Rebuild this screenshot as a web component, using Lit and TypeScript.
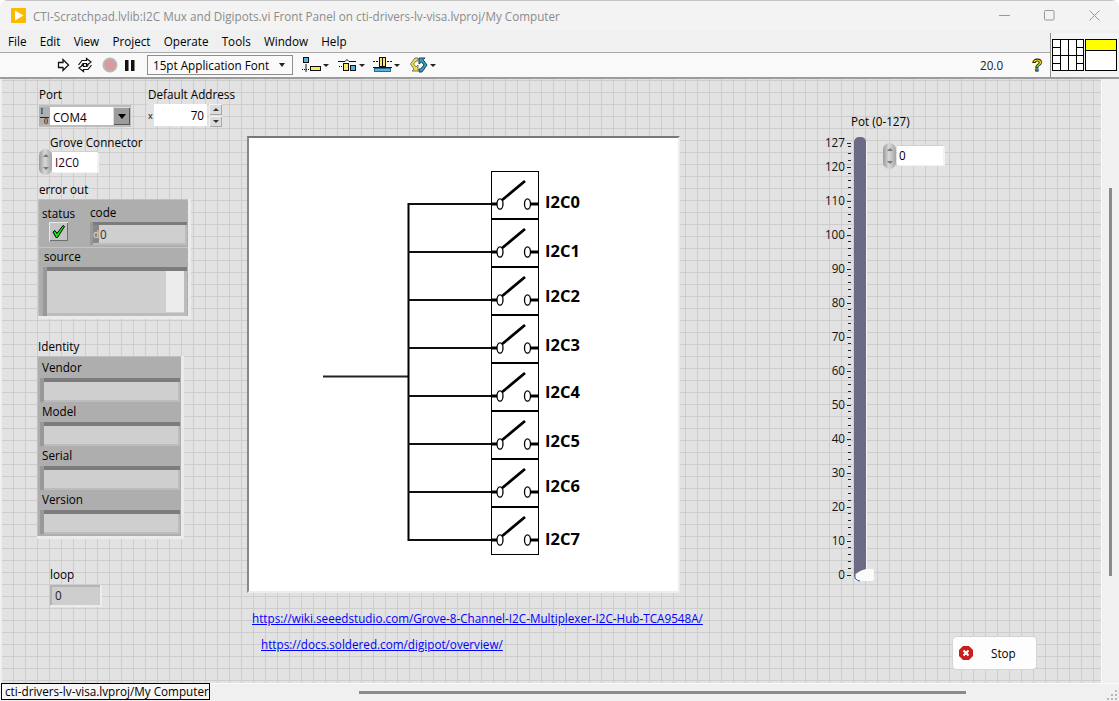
import { LitElement, html, css, svg } from "lit";
import { customElement } from "lit/decorators.js";

const SWITCHES = [
  { y: 204, label: "I2C0", ly: 208 },
  { y: 252, label: "I2C1", ly: 257 },
  { y: 300, label: "I2C2", ly: 302 },
  { y: 348, label: "I2C3", ly: 351 },
  { y: 396, label: "I2C4", ly: 398 },
  { y: 444, label: "I2C5", ly: 447 },
  { y: 492, label: "I2C6", ly: 492 },
  { y: 540, label: "I2C7", ly: 545 },
];
const CLUSTER = ["Vendor", "Model", "Serial", "Version"];
const SCALE = [127, 120, 110, 100, 90, 80, 70, 60, 50, 40, 30, 20, 10, 0];
const MENU = ["File", "Edit", "View", "Project", "Operate", "Tools", "Window", "Help"];

function scaleY(v: number) {
  return 574.5 - v * 3.4;
}

@customElement("app-root")
export class AppRoot extends LitElement {
  static styles = css`
    :host { display: block; width: 1119px; height: 701px; overflow: hidden; background: #fff;
      font-family: "Open Sans", "Noto Sans", sans-serif; font-size: 11.7px; color: #000; }
    .window { width: 1119px; height: 701px; display: flex; flex-direction: column; background: #f0f0f0; position: relative;
      border-radius: 8px 8px 0 0; box-sizing: border-box; overflow: hidden; }
    .title { height: 30px; flex: none; display: flex; align-items: center; padding-left: 11px; gap: 7px;
      background: #f3f3f3; color: #8b8b8b; box-shadow: inset 0 1px 0 #c4c4c4; }
    .logo { width: 15px; height: 15px; flex: none; display: block; }
    .title-text { flex: 1; white-space: nowrap; position: relative; top: 1px; }
    .caps { display: flex; align-items: center; height: 30px; padding-right: 2px; }
    .cap { width: 45px; height: 30px; display: flex; align-items: center; justify-content: center; }
    .cap svg { display: block; }
    .menubar { height: 23px; flex: none; display: flex; align-items: center; padding-left: 8px; gap: 13.2px;
      background: #f0f0f0; border-bottom: 1px solid #a8a8a8; box-sizing: border-box; }
    .toolbar { height: 26px; flex: none; display: flex; align-items: center; background: #f9f9f9; padding-left: 55px;
      border-bottom: 2px solid #9c9c9c; box-sizing: border-box; position: relative; }
    .toolbar svg { display: block; flex: none; }
    .tool-run { margin-right: 6px; }
    .tool-loop { margin-right: 9px; }
    .tool-abort { margin-right: 7px; }
    .tool-pause { margin-right: 12px; }
    .fontbox { width: 146px; height: 20px; box-sizing: border-box; border: 1px solid #8e8e8e; display: flex;
      align-items: center; padding: 0 7px 0 5px; justify-content: space-between; margin-right: 9px; background: #fafafa; }
    .caret { width: 0; height: 0; border-left: 3.5px solid transparent; border-right: 3.5px solid transparent;
      border-top: 4px solid #222; }
    .tool-group { display: flex; align-items: center; gap: 2px; margin-right: 8.5px; }
    .tool-group .caret { border-left-width: 3px; border-right-width: 3px; border-top-width: 3px; }
    .ctx { position: absolute; left: 980px; top: 4px; color: #222; }
    .help { position: absolute; left: 1031px; top: 3px; }
    .connector { position: absolute; left: 1050px; top: 33px; width: 69px; height: 44px; background: #f4f4f4;
      border-left: 1px solid #8e8e8e; box-sizing: border-box; z-index: 3; }
    .connector svg { display: block; margin: 6px 0 0 1px; }
    .workspace { flex: 1; display: flex; min-height: 0; }
    .canvas { flex: 1; position: relative; overflow: hidden; background-color: #e2e2e2;
      background-image: linear-gradient(#cdcdcd 1px, transparent 1px), linear-gradient(90deg, #cdcdcd 1px, transparent 1px);
      background-size: 12px 12px; background-position: 1px 1px; box-shadow: inset 2px 0 0 #f0f0f0; }
    .vscroll { width: 18px; flex: none; position: relative; background: #f0f0f0; box-shadow: inset 1px 0 0 #fafafa; }
    .vthumb { position: absolute; left: 7.500px; top: 109px; width: 3px; height: 388px; background: #8a8a8a; }
    .statusbar { height: 18px; flex: none; position: relative; background: #f0f0f0; box-shadow: inset 0 1px 0 #fafafa; }
    .tip { position: absolute; left: 1px; top: 0; width: 209px; height: 17px; box-sizing: border-box; border: 1px solid #000;
      background: #f6f6f6; padding-left: 3px; line-height: 14px; white-space: nowrap; overflow: hidden; }
    .hthumb { position: absolute; left: 359px; top: 8px; width: 607px; height: 3px; background: #8a8a8a; }
    .grip { position: absolute; right: 1px; bottom: 1px; display: block; }

    .abs { position: absolute; white-space: nowrap; }
    .lab { line-height: 15px; }

    .l-port { left: 39px; top: 8px; }
    .port { left: 39px; top: 26px; width: 92px; height: 22px; background: #bdbdbd; display: flex; align-items: center;
      box-sizing: border-box; padding: 2px 1px 2px 0; }
    .port-io { width: 11px; height: 18px; display: block; flex: none; background: #b0b0b0; }
    .port-io text { font-family: "Liberation Serif", serif; font-weight: 400; font-size: 8px; fill: #000; }
    .port-box { width: 63px; height: 18px; background: #fff; line-height: 20px; padding-left: 3px; box-sizing: border-box; flex: none; }
    .port-btn { width: 17px; height: 18px; background: #9c9c9c; box-shadow: inset 1px 1px 0 #ddd, inset -1px -1px 0 #555;
      display: flex; align-items: center; justify-content: center; }
    .port-btn .caret { border-left-width: 4px; border-right-width: 4px; border-top-width: 5px; border-top-color: #000; }

    .l-addr { left: 148px; top: 8px; }
    .addr { left: 147px; top: 25px; width: 60px; height: 22px; background: #fff; display: flex; }
    .addr-x { width: 6px; background: #dfe3e3; font-size: 9px; line-height: 24px; padding-left: 1px; flex: none; }
    .addr-v { flex: 1; text-align: right; padding-right: 3px; line-height: 22px; }
    .spin { left: 209px; top: 25px; display: flex; flex-direction: column; gap: 1px; }
    .spin i { display: flex; width: 13px; height: 11px; background: #dcdcdc; box-shadow: inset 1px 1px 0 #f2f2f2, inset -1px -1px 0 #a8a8a8; box-sizing: border-box;
      align-items: center; justify-content: center; }
    .tri-up { width: 0; height: 0; border-left: 3.500px solid transparent; border-right: 3.500px solid transparent; border-bottom: 3px solid #333; }
    .tri-dn { width: 0; height: 0; border-left: 3.500px solid transparent; border-right: 3.500px solid transparent; border-top: 3px solid #333; }

    .l-grove { left: 50px; top: 56px; }
    .ring { width: 13px; height: 26px; border-radius: 6.500px; background: linear-gradient(90deg, #9a9a9a, #d8d8d8 45%, #a4a4a4);
      display: flex; flex-direction: column; align-items: center; justify-content: space-between; padding: 5px 0; box-sizing: border-box; }
    .ring .tri-up { border-bottom-color: #7a7a7a; }
    .ring .tri-dn { border-top-color: #7a7a7a; }
    .grove-ring { left: 39px; top: 70px; }
    .grove-box { left: 52px; top: 73px; width: 45px; height: 20px; background: #fff; padding-left: 3px; line-height: 21px; box-sizing: border-box;
      box-shadow: 0 -1px 0 #d0d0d0, 1px 0 0 #f2f2f2, 2px 1px 0 #f2f2f2; color: #202; }

    .l-err { left: 39px; top: 103px; }
    .cluster { background: #aeaeae; box-shadow: inset 1px 1px 0 #c0c0c0; border-right: 3px solid #ebebeb; border-bottom: 3px solid #ebebeb;
      box-sizing: border-box; }
    .err { left: 38px; top: 120px; width: 153px; height: 120px; }
    .e-status { left: 42px; top: 127px; }
    .e-code { left: 90px; top: 126px; }
    .e-check { left: 49px; top: 143px; width: 19px; height: 19px; background: #c4c4c4; box-shadow: inset 1px 1px 0 #e8e8e8, inset -1px -1px 0 #707070;
      display: flex; align-items: center; justify-content: center; }
    .sunk { background: #cfcfcf; box-sizing: border-box; box-shadow: inset 3px 0 0 #999, inset 0 3px 0 #7c7c7c, inset -2px -2px 0 #bcbcbc; }
    .codebox { left: 90px; top: 143px; width: 97px; height: 23px; display: flex; line-height: 25px; }
    .codebox-d { width: 6px; margin: 3px 0 2px 3px; background: #888; color: #ddd; font-size: 10px; line-height: 19px; text-align: right; flex: none; }
    .codebox-v { padding-left: 1px; color: #333; }
    .e-divb { left: 39px; top: 168px; width: 149px; height: 1px; background: #c4c4c4; }
    .e-source { left: 44px; top: 170px; }
    .sourcebox { left: 43px; top: 188px; width: 144px; height: 49px; box-shadow: inset 4px 0 0 #999, inset 0 4px 0 #7c7c7c, inset -3px -3px 0 #bcbcbc; }
    .sourcebar { left: 166px; top: 192px; width: 18px; height: 41px; background: #ececec; }

    .l-id { left: 38px; top: 260px; }
    .identity { left: 37px; top: 277px; width: 147px; height: 183px; display: flex; flex-direction: column; padding: 2px 1px 0 3px; }
    .id-row { height: 44px; flex: none; box-sizing: border-box; }
    .id-name { height: 20px; line-height: 18px; padding-left: 2px; }
    .id-box { height: 24px; box-shadow: inset 4px 0 0 #999, inset 0 4px 0 #7c7c7c, inset -2px -2px 0 #bcbcbc; }

    .l-loop { left: 50px; top: 488px; }
    .loopbox { left: 50px; top: 506px; width: 52px; height: 22px; background: #cecece; line-height: 20px; padding-left: 5px; box-sizing: border-box;
      box-shadow: inset 2px 2px 0 #b4b4b4; border-right: 2px solid #ececec; border-bottom: 2px solid #ececec; color: #222; }

    .pic { left: 247px; top: 57px; width: 433px; height: 457px; background: #fff; box-sizing: border-box;
      border-top: 2px solid #777; border-left: 2px solid #888; border-right: 2px solid #ededed; border-bottom: 2px solid #ededed; }
    .pic svg { display: block; }
    .pic text { font-family: "Open Sans", "Noto Sans", sans-serif; font-weight: 700; font-size: 16.500px; fill: #000; }

    a.link { color: #0000ff; text-decoration: underline; }
    .link1 { left: 252px; top: 532px; }
    .link2 { left: 261px; top: 558px; }

    .l-pot { left: 851px; top: 35px; }
    .slider { left: 820px; top: 50px; }
    .slider text { font-family: "Open Sans", "Noto Sans", sans-serif; font-size: 11.700px; fill: #111; }
    .pot-ring { left: 883px; top: 64px; }
    .pot-box { left: 897px; top: 67px; width: 46px; height: 19px; background: #fff; padding-left: 2px; line-height: 19px; box-sizing: border-box;
      box-shadow: 0 -1px 0 #d0d0d0, 1px 0 0 #f2f2f2, 2px 1px 0 #f2f2f2; }

    .stop { left: 953px; top: 558px; width: 83px; height: 32px; background: #fdfdfd; border-radius: 4px; box-shadow: 0 0 0 1px #d4d4d4;
      display: flex; align-items: center; }
    .stop svg { margin-left: 6px; flex: none; display: block; }
    .stop span { margin-left: 18px; }
  `;

  private picture() {
    return svg`<svg width="429" height="453" viewBox="249 138 429 453">
      <rect x="491.5" y="171.5" width="47" height="383" fill="#fff" stroke="#000" stroke-width="1"/>
      ${SWITCHES.slice(0, 7).map((s) => svg`<line x1="491" x2="539" y1=${s.y + 15} y2=${s.y + 15} stroke="#000" stroke-width="2"/>`)}
      <line x1="323" x2="408" y1="376.5" y2="376.5" stroke="#222" stroke-width="2"/>
      <line x1="408.5" x2="408.5" y1="203" y2="541" stroke="#000" stroke-width="2"/>
      ${SWITCHES.map(
        (s) => svg`
        <line x1="408" x2="491" y1=${s.y} y2=${s.y} stroke="#111" stroke-width="2"/>
        <line x1="491" x2="497" y1=${s.y} y2=${s.y} stroke="#000" stroke-width="3"/>
        <line x1="530" x2="539" y1=${s.y} y2=${s.y} stroke="#000" stroke-width="3"/>
        <line x1="501" x2="525" y1=${s.y - 3} y2=${s.y - 23} stroke="#000" stroke-width="2.800"/>
        <ellipse cx="500" cy=${s.y} rx="3" ry="5.200" fill="#fff" stroke="#000" stroke-width="1.300"/>
        <ellipse cx="527.500" cy=${s.y} rx="3" ry="5.200" fill="#fff" stroke="#000" stroke-width="1.300"/>
        <text x="545" y=${s.ly}>${s.label}</text>`
      )}
    </svg>`;
  }

  private slider() {
    const minors: number[] = [];
    for (let v = 2; v < 127; v += 2) if (v % 10 !== 0) minors.push(v);
    return svg`<svg width="70" height="540" viewBox="820 129 70 540" overflow="visible">
      ${SCALE.map(
        (v) => svg`
        <text x="845" y=${scaleY(v) + 4.5} text-anchor="end">${v}</text>
        <line x1="847" x2="851" y1=${Math.round(scaleY(v)) + 0.5} y2=${Math.round(scaleY(v)) + 0.5} stroke="#222"/>`
      )}
      ${minors.map((v) => svg`<line x1="848" x2="851" y1=${Math.round(scaleY(v)) + 0.5} y2=${Math.round(scaleY(v)) + 0.5} stroke="#222"/>`)}
      <rect x="854" y="137" width="12" height="444" rx="5" fill="#6b6b85"/>
      <line x1="866.5" x2="866.5" y1="142" y2="570" stroke="#f4f4f4"/>
      <path d="M855 579 q-2 -3 2 -6 q4 -3 9 -4 h6 q2 0 2 2 v8 q0 2 -2 2 h-16 z" fill="#fbfbfb"/>
      <path d="M855 575 q-1 5 5 6" fill="none" stroke="#2050d0"/>
    </svg>`;
  }

  render() {
    return html`<div class="window">
      <div class="title">
        <svg class="logo" viewBox="0 0 15 15"><rect width="15" height="15" rx="1" fill="#fcb900"/><path d="M4 2.500 L12.500 7.500 L4 12.500 Z" fill="#fff"/></svg>
        <div class="title-text">CTI-Scratchpad.lvlib:I2C Mux and Digipots.vi Front Panel on cti-drivers-lv-visa.lvproj/My Computer</div>
        <div class="caps">
          <div class="cap"><svg width="11" height="11"><line x1="0" x2="11" y1="5.5" y2="5.5" stroke="#999"/></svg></div>
          <div class="cap"><svg width="11" height="11"><rect x=".5" y=".5" width="9.5" height="9.5" rx="1" fill="none" stroke="#999"/></svg></div>
          <div class="cap"><svg width="11" height="11"><path d="M.5 .5 L10.5 10.5 M10.5 .5 L.5 10.5" stroke="#999"/></svg></div>
        </div>
      </div>
      <div class="menubar">${MENU.map((m) => html`<span>${m}</span>`)}</div>
      <div class="toolbar">
        <svg class="tool-run" width="16" height="16" viewBox="0 0 16 16"><path d="M3.500 5.500 H8 V2.500 L13.500 8 L8 13.500 V10.500 H3.500 Z" fill="#fff" stroke="#111" stroke-width="1.300"/></svg>
        <svg class="tool-loop" width="16" height="16" viewBox="0 0 16 16"><path d="M1.500 8 L5 3.500 H9.500 V1.500 L14 5 L9.500 8.500 V6.500 H6 L4.500 8.500" fill="#fff" stroke="#111" stroke-width="1.200"/><path d="M14.500 8 L11 12.500 H6.500 V14.500 L2 11 L6.500 7.500 V9.500 H10 L11.500 7.500" fill="#fff" stroke="#111" stroke-width="1.200"/></svg>
        <svg class="tool-abort" width="16" height="16" viewBox="0 0 16 16"><circle cx="8" cy="8" r="6.500" fill="#d89a9a" stroke="#b8b8b8" stroke-width="2"/></svg>
        <svg class="tool-pause" width="10" height="13" viewBox="0 0 10 13"><rect x="0" y="1" width="3.500" height="11" fill="#111"/><rect x="6" y="1" width="3.500" height="11" fill="#111"/></svg>
        <div class="fontbox"><span>15pt Application Font</span><span class="caret"></span></div>
        <div class="tool-group">
          <svg width="19" height="16" viewBox="0 0 19 16"><rect x="1.500" y=".5" width="5" height="5" fill="#5ab4e0" stroke="#111"/><path d="M4 7 V15" stroke="#111"/><path d="M0 12.500 H8" stroke="#111" stroke-dasharray="1 1"/><rect x="8.500" y="9.500" width="10" height="4" fill="#f6e96a" stroke="#111"/></svg>
          <span class="caret"></span>
        </div>
        <div class="tool-group">
          <svg width="19" height="16" viewBox="0 0 19 16"><path d="M0 4.500 H7 L9 2.500 L11 4.500 H18" fill="none" stroke="#111"/><path d="M1 9.500 H4" stroke="#111" stroke-dasharray="1 1"/><rect x="5.500" y="6.500" width="5" height="7" fill="#f6e96a" stroke="#111"/><rect x="12.500" y="8.500" width="5" height="5" fill="#5ab4e0" stroke="#111"/></svg>
          <span class="caret"></span>
        </div>
        <div class="tool-group">
          <svg width="19" height="16" viewBox="0 0 19 16"><rect x="6.500" y=".5" width="3" height="9" fill="#f6e96a" stroke="#111"/><rect x="9.500" y=".5" width="3" height="9" fill="#f6e96a" stroke="#111"/><path d="M0 4.500 H5 M14 4.500 H19" stroke="#111" stroke-dasharray="2 1"/><path d="M0 10.500 H19" stroke="#111"/><rect x="1.500" y="11.500" width="16" height="3" fill="#5ab4e0" stroke="#2a6a8a"/></svg>
          <span class="caret"></span>
        </div>
        <div class="tool-group">
          <svg width="19" height="18" viewBox="0 0 19 18"><path d="M9 2 H6 L1.500 8 L5 13 L3 15 H9 V9 L7 11 L4.500 8 L7 5 H9 Z" fill="#f2e23c" stroke="#776"/><path d="M10 2 V8 L12.500 6 L15 9 L11.500 13 H10 V16 H13 L18 9 L14 3.500 L16 2 Z" fill="#2e9cc4" stroke="#245"/></svg>
          <span class="caret"></span>
        </div>
        <div class="ctx">20.0</div>
        <svg class="help" width="14" height="19" viewBox="0 0 14 19"><text x="1" y="15" font-family="Liberation Sans, sans-serif" font-weight="700" font-size="17" fill="#ffef00" stroke="#000" stroke-width=".8">?</text></svg>
      </div>
      <div class="workspace">
        <div class="canvas">
          <div class="abs lab l-port">Port</div>
          <div class="abs port">
            <svg class="port-io" viewBox="0 0 11 18"><text x="1.500" y="7">I</text><path d="M1 10.500 H10" stroke="#000" stroke-width=".8"/><text x="5" y="17">0</text></svg>
            <div class="port-box">COM4</div>
            <div class="port-btn"><span class="caret"></span></div>
          </div>
          <div class="abs lab l-addr">Default Address</div>
          <div class="abs addr"><div class="addr-x">x</div><div class="addr-v">70</div></div>
          <div class="abs spin"><i><span class="tri-up"></span></i><i><span class="tri-dn"></span></i></div>

          <div class="abs lab l-grove">Grove Connector</div>
          <div class="abs ring grove-ring"><span class="tri-up"></span><span class="tri-dn"></span></div>
          <div class="abs grove-box">I2C0</div>

          <div class="abs lab l-err">error out</div>
          <div class="abs cluster err"></div>
          <div class="abs lab e-status">status</div>
          <div class="abs lab e-code">code</div>
          <div class="abs e-check"><svg width="15" height="15" viewBox="0 0 15 15"><path d="M2 8 L4 6.500 L6 9.500 L12 1.500 L13.500 2.500 L6.500 13.500 L5 13.500 Z" fill="#12e812" stroke="#000"/></svg></div>
          <div class="abs sunk codebox"><div class="codebox-d">d</div><div class="codebox-v">0</div></div>
          <div class="abs e-divb"></div>
          <div class="abs lab e-source">source</div>
          <div class="abs sunk sourcebox"></div>
          <div class="abs sourcebar"></div>

          <div class="abs lab l-id">Identity</div>
          <div class="abs cluster identity">
            ${CLUSTER.map((n) => html`<div class="id-row"><div class="id-name">${n}</div><div class="sunk id-box"></div></div>`)}
          </div>

          <div class="abs lab l-loop">loop</div>
          <div class="abs loopbox">0</div>

          <div class="abs pic">${this.picture()}</div>

          <a class="abs lab link link1" href="#">https://wiki.seeedstudio.com/Grove-8-Channel-I2C-Multiplexer-I2C-Hub-TCA9548A/</a>
          <a class="abs lab link link2" href="#">https://docs.soldered.com/digipot/overview/</a>

          <div class="abs lab l-pot">Pot (0-127)</div>
          <div class="abs slider">${this.slider()}</div>
          <div class="abs ring pot-ring"><span class="tri-up"></span><span class="tri-dn"></span></div>
          <div class="abs pot-box">0</div>

          <div class="abs stop">
            <svg width="14" height="14" viewBox="0 0 14 14"><path d="M4 0 H10 L14 4 V10 L10 14 H4 L0 10 V4 Z" fill="#c81e1e"/><path d="M4.500 4.500 L9.500 9.500 M9.500 4.500 L4.500 9.500" stroke="#fff" stroke-width="2"/></svg>
            <span>Stop</span>
          </div>
        </div>
        <div class="vscroll"><div class="vthumb"></div></div>
      </div>
      <div class="statusbar">
        <div class="tip">cti-drivers-lv-visa.lvproj/My Computer</div>
        <div class="hthumb"></div>
        <svg class="grip" width="11" height="11" viewBox="0 0 11 11"><path d="M8 1h2v2h-2zM4 5h2v2h-2zM8 5h2v2h-2zM0 9h2v2h-2zM4 9h2v2h-2zM8 9h2v2h-2z" fill="#b8b8b8"/></svg>
      </div>
      <div class="connector"><svg width="66" height="33" viewBox="0 0 66 33">
        <g fill="#fff" stroke="#000"><rect x=".5" y=".5" width="31" height="31"/><rect x="33.500" y=".5" width="31" height="31"/></g>
        <rect x="34" y="1" width="30" height="10" fill="#ffff00"/><path d="M33 11.500 H65" stroke="#000"/>
        <path d="M8.500 1 V31 M16.500 1 V31 M24.500 1 V31 M1 8.500 H8 M24 8.500 H31 M1 16.500 H31 M1 24.500 H8 M24 24.500 H31" stroke="#000" fill="none"/>
      </svg></div>
    </div>`;
  }
}
